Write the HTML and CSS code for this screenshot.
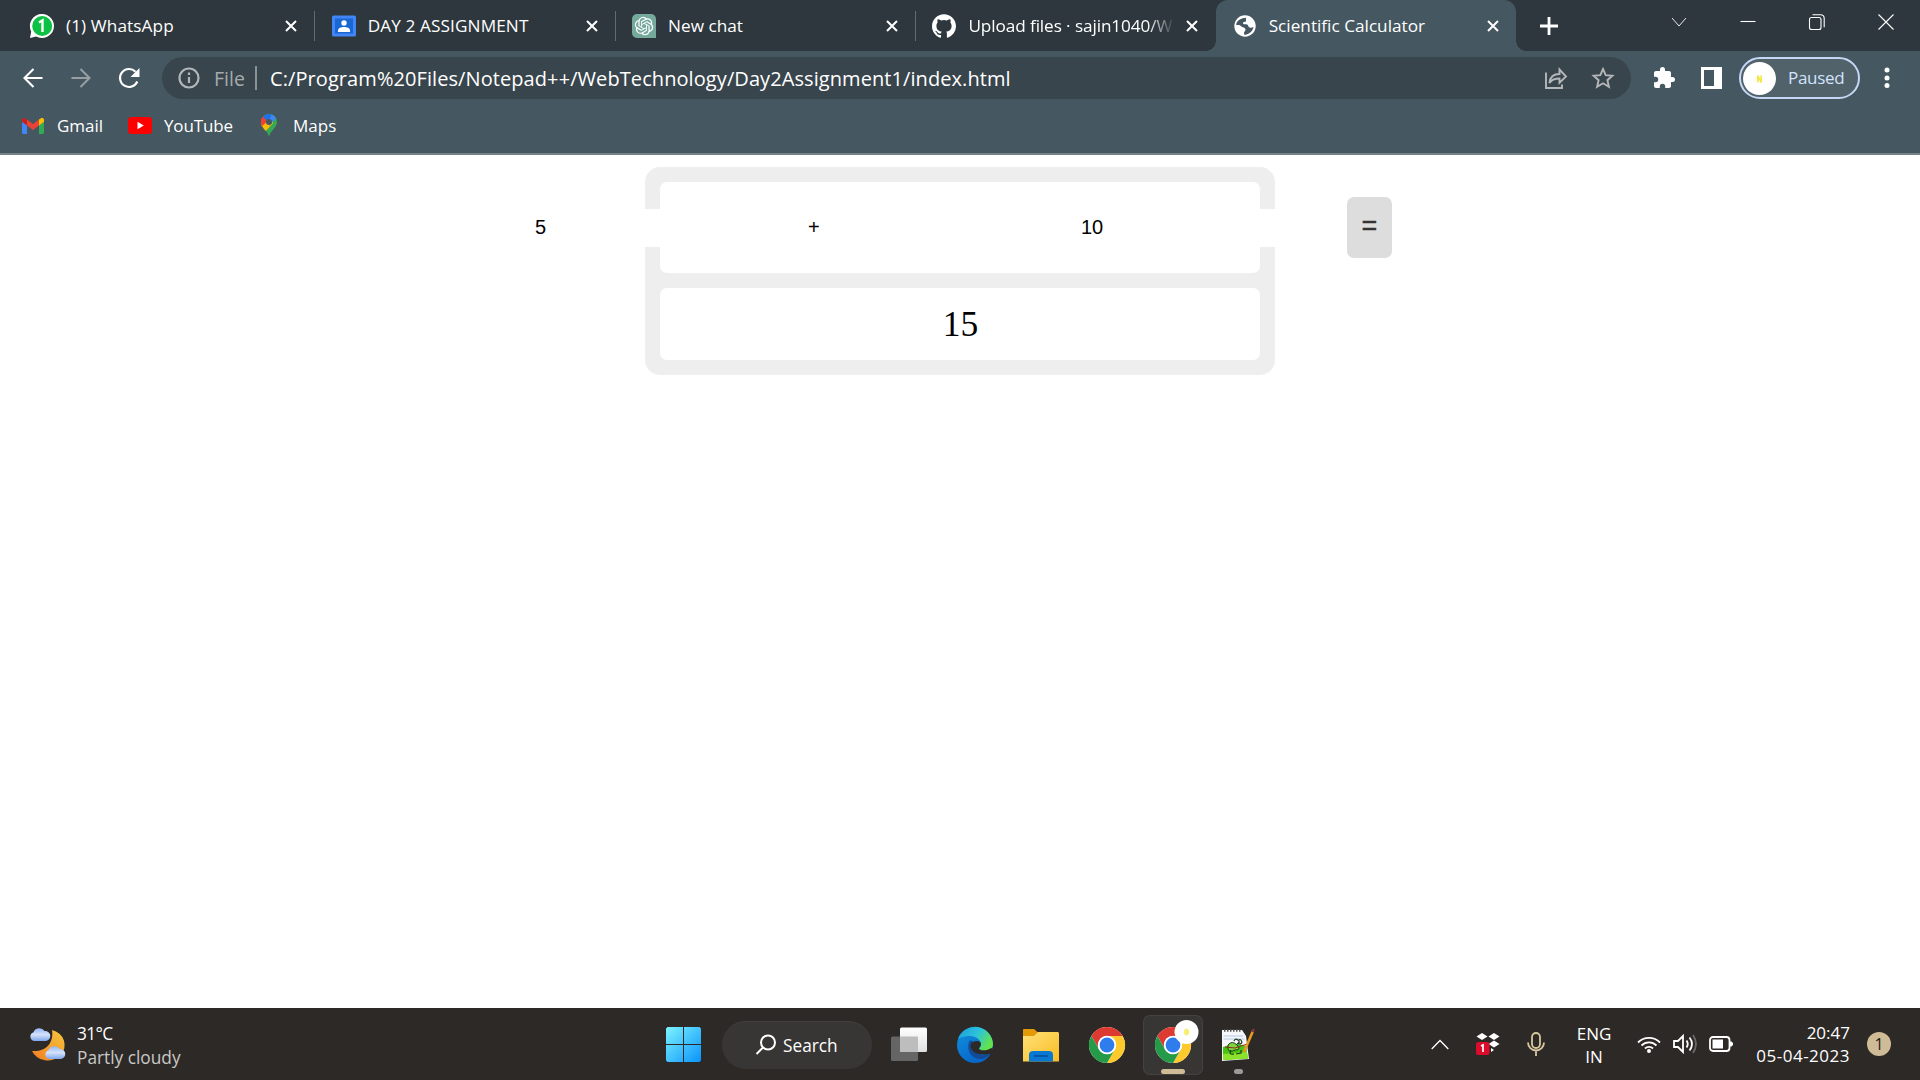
FILE: index.html
```html
<!DOCTYPE html>
<html lang="en">
<head>
<meta charset="utf-8">
<title>Scientific Calculator</title>
<link rel="stylesheet" href="styles.css">
</head>
<body>
<header class="browser">
  <div class="tabs">
    <div class="tab">
      <svg class="favicon" viewBox="0 0 24 24"><path d="M12 0a12 12 0 1 1-5.800 22.500L0 24l1.200-6.500A12 12 0 0 1 12 0z" fill="#fff"/><circle cx="12.200" cy="12" r="10" fill="#0cc143"/><path d="M9 8.500l3.500-2.200V18" fill="none" stroke="#fff" stroke-width="2.400"/></svg>
      <span class="title t-wa">(1) WhatsApp</span>
      <svg class="close" viewBox="0 0 12 12"><path d="M1 1l10 10M11 1L1 11"/></svg>
    </div>
    <div class="tab">
      <svg class="favicon" viewBox="0 0 24 24"><rect y="1.500" width="24" height="21" rx="1.500" fill="#4285f4"/><rect x="3" y="4.500" width="18" height="15" fill="#1967d2"/><circle cx="12" cy="9" r="2.700" fill="#fff"/><path d="M6 18v-1.500c0-2.500 3-3.500 6-3.500s6 1 6 3.500V18z" fill="#fff"/></svg>
      <span class="title t-day">DAY 2 ASSIGNMENT</span>
      <svg class="close" viewBox="0 0 12 12"><path d="M1 1l10 10M11 1L1 11"/></svg>
    </div>
    <div class="tab">
      <svg class="favicon" viewBox="0 0 24 24"><path d="M5 0h14a5 5 0 0 1 5 5v19H5a5 5 0 0 1-5-5V5a5 5 0 0 1 5-5z" fill="#75a99c"/><g transform="translate(2.800 2.800) scale(.77)" fill="#fff"><path d="M22.282 9.821a5.985 5.985 0 0 0-.516-4.910 6.046 6.046 0 0 0-6.510-2.900A6.065 6.065 0 0 0 4.981 4.182a5.985 5.985 0 0 0-3.998 2.900 6.046 6.046 0 0 0 .743 7.097 5.980 5.980 0 0 0 .511 4.911 6.051 6.051 0 0 0 6.515 2.900A5.985 5.985 0 0 0 13.260 24a6.056 6.056 0 0 0 5.772-4.206 5.990 5.990 0 0 0 3.998-2.900 6.056 6.056 0 0 0-.748-7.073zM13.260 22.430a4.476 4.476 0 0 1-2.876-1.040l.142-.081 4.778-2.758a.795.795 0 0 0 .393-.682v-6.736l2.020 1.168a.071.071 0 0 1 .038.052v5.583a4.504 4.504 0 0 1-4.495 4.494zM3.600 18.304a4.471 4.471 0 0 1-.535-3.014l.142.085 4.783 2.759a.771.771 0 0 0 .780 0l5.843-3.369v2.332a.080.080 0 0 1-.033.062L9.740 19.950a4.499 4.499 0 0 1-6.140-1.646zM2.341 7.896a4.485 4.485 0 0 1 2.366-1.973V11.600a.766.766 0 0 0 .388.677l5.815 3.354-2.020 1.169a.076.076 0 0 1-.071 0l-4.830-2.787A4.504 4.504 0 0 1 2.341 7.872zm16.596 3.856L13.104 8.364l2.015-1.164a.076.076 0 0 1 .071 0l4.830 2.791a4.494 4.494 0 0 1-.676 8.105v-5.678a.790.790 0 0 0-.407-.666zm2.011-3.024l-.142-.085-4.774-2.782a.776.776 0 0 0-.785 0L9.409 9.230V6.897a.066.066 0 0 1 .028-.061l4.830-2.787a4.499 4.499 0 0 1 6.681 4.660zM8.307 12.863l-2.020-1.164a.080.080 0 0 1-.038-.057V6.074a4.499 4.499 0 0 1 7.376-3.453l-.142.080L8.704 5.459a.795.795 0 0 0-.393.682zm1.097-2.365l2.602-1.500 2.607 1.500v2.999l-2.597 1.500-2.607-1.500z"/></g></svg>
      <span class="title t-chat">New chat</span>
      <svg class="close" viewBox="0 0 12 12"><path d="M1 1l10 10M11 1L1 11"/></svg>
    </div>
    <div class="tab last">
      <svg class="favicon" viewBox="0 0 24 24"><path fill="#fff" d="M12 .3C5.400.3 0 5.700 0 12.300c0 5.300 3.400 9.800 8.200 11.400.6.1.8-.3.8-.6v-2.200c-3.300.7-4-1.400-4-1.400-.5-1.400-1.300-1.800-1.300-1.800-1.100-.7.1-.7.100-.7 1.200.1 1.800 1.200 1.800 1.200 1.100 1.800 2.800 1.300 3.500 1 .1-.8.4-1.300.8-1.600-2.700-.3-5.500-1.300-5.500-5.900 0-1.300.5-2.400 1.200-3.200-.1-.3-.5-1.500.1-3.200 0 0 1-.3 3.300 1.200a11.500 11.500 0 0 1 6 0c2.300-1.500 3.300-1.200 3.300-1.200.7 1.700.2 2.900.1 3.200.8.8 1.200 1.900 1.200 3.200 0 4.600-2.800 5.600-5.500 5.900.4.400.8 1.100.8 2.200v3.300c0 .3.200.7.8.6A12 12 0 0 0 24 12.300C24 5.700 18.600.3 12 .3z"/></svg>
      <span class="title t-git fade">Upload files · sajin1040/W</span>
      <svg class="close" viewBox="0 0 12 12"><path d="M1 1l10 10M11 1L1 11"/></svg>
    </div>
    <div class="tab active">
      <svg class="favicon" viewBox="0 0 24 24"><circle cx="12" cy="12" r="10.700" fill="#fff"/><path d="M13.500 3.800C8 4 3.500 6.500 3.200 11c2.500-.3 4 0 5 1.200 1.200 1.500 4 .8 4.300 3.300.2 1.800-1.500 2-1.500 3.500 0 1 .3 1.500.8 1.900C16 20.500 20 17 20.500 13c-1.500.6-2.500 1.200-4 .5-1.500-.8-1-2.500-2.500-3-1.500-.6-4 .5-4-1.200 0-2 2.500-.8 3-2.300.3-1.200-.5-2 .5-3.200z" fill="#455760"/></svg>
      <span class="title t-sci">Scientific Calculator</span>
      <svg class="close" viewBox="0 0 12 12"><path d="M1 1l10 10M11 1L1 11"/></svg>
    </div>
    <svg class="newtab" viewBox="0 0 18 18"><path d="M9 0v18M0 9h18" stroke="#fff" stroke-width="2.800"/></svg>
    <div class="winctl">
      <svg viewBox="0 0 16 16"><path d="M1 4l7 8 7-8"/></svg>
      <svg viewBox="0 0 16 16"><path d="M.5 7.500h15"/></svg>
      <svg viewBox="0 0 16 16"><rect x=".5" y="3.500" width="11.500" height="12" rx="2"/><path d="M3.500.7h8.200a3.500 3.500 0 0 1 3.500 3.500v9"/></svg>
      <svg viewBox="0 0 16 16"><path d="M.5.5l15 15M15.500.5l-15 15"/></svg>
    </div>
  </div>
  <div class="toolbar">
    <svg class="nav" viewBox="0 0 24 24"><path d="M21.500 12H3.500M12.500 3L3.500 12l9 9"/></svg>
    <svg class="nav dim" viewBox="0 0 24 24"><path d="M2.500 12h18M11.500 3l9 9-9 9"/></svg>
    <svg class="nav" viewBox="0 0 24 24"><path d="M20.300 15.500a9 9 0 1 1-1.800-9.800" /><path d="M22.500 2v9h-9z" fill="#fff" stroke="none"/></svg>
    <div class="address">
      <svg class="info" viewBox="0 0 22 22"><circle cx="11" cy="11" r="9.500"/><path d="M11 10v6M11 5.500v2.500"/></svg>
      <span class="file">File</span>
      <i class="bar"></i>
      <span class="url">C:/Program%20Files/Notepad++/WebTechnology/Day2Assignment1/index.html</span>
      <svg class="share" viewBox="0 0 24 24"><path d="M2 6.500V22h16v-3.500"/><path d="M5.500 17c.5-6 3.500-9 10-9V3.500l6.500 7-6.500 6.300v-4.300c-5 0-8 1-10 4.500z"/></svg>
      <svg class="star" viewBox="0 0 24 24"><path d="M12 3l2.700 6.100 6.700.6-5 4.500 1.500 6.600-5.900-3.500-5.900 3.500 1.500-6.600-5-4.500 6.700-.6z"/></svg>
    </div>
    <svg class="ext" viewBox="0 0 24 24"><path fill="#fff" d="M20.500 11H19V7c0-1.100-.9-2-2-2h-4V3.500a2.500 2.500 0 0 0-5 0V5H4c-1.100 0-2 .9-2 2v3.800h1.500a2.700 2.700 0 0 1 0 5.400H2V20c0 1.100.9 2 2 2h3.800v-1.500a2.700 2.700 0 0 1 5.400 0V22H17c1.100 0 2-.9 2-2v-4h1.500a2.500 2.500 0 0 0 0-5z"/></svg>
    <i class="panel"></i>
    <div class="profile"><svg class="avatar" viewBox="0 0 33 33"><circle cx="16.500" cy="16.500" r="16.500" fill="#fff"/><path d="M14.800 20.500v-7l3.400 7v-7" fill="none" stroke="#f3e743" stroke-width="1.700"/></svg><span class="paused">Paused</span></div>
    <svg class="dots" viewBox="0 0 6 22"><circle cx="3" cy="3" r="2.500"/><circle cx="3" cy="11" r="2.500"/><circle cx="3" cy="18.500" r="2.500"/></svg>
  </div>
  <nav class="bookmarks">
    <svg class="gmail" viewBox="0 0 22 16"><path d="M0 2v12.500C0 15.300.7 16 1.500 16H5V6z" fill="#4285f4"/><path d="M22 2v12.500c0 .8-.7 1.500-1.500 1.500H17V6z" fill="#34a853"/><path d="M17 1.500V7.500l5-3.700V2c0-2-2-2.500-3.500-1.500z" fill="#fbbc04"/><path d="M5 7.500V1.500L11 6l6-4.500v6L11 12z" fill="#ea4335"/><path d="M0 2c0-2 2-2.500 3.500-1.500L5 1.500v6L0 3.800z" fill="#c5221f"/></svg>
    <span class="b-gmail">Gmail</span>
    <svg class="youtube" viewBox="0 0 24 17"><rect width="24" height="17" rx="3.500" fill="#f00"/><path d="M9.500 4.800v7.400l6.300-3.700z" fill="#fff"/></svg>
    <span class="b-yt">YouTube</span>
    <svg class="maps" viewBox="0 0 16 23"><clipPath id="pin"><path d="M8 0a8 8 0 0 1 8 8c0 6-6.500 8-8 15C6.500 16 0 14 0 8a8 8 0 0 1 8-8z"/></clipPath><g clip-path="url(#pin)"><rect width="16" height="23" fill="#34a853"/><path d="M-1 9L8 8l4 1-9 9z" fill="#fbbc04"/><path d="M-1 2l3 0 6 6-6 5-3-2z" fill="#ea4335"/><path d="M-1 12l9-9 4 6-9 10z" fill="#fbbc04"/><path d="M-1 1h4l5 5-8 7z" fill="#ea4335"/><path d="M2 3L6-1h7L8 8z" fill="#1a73e8"/><path d="M11 0l5 3-8 9V6z" fill="#4285f4"/></g><circle cx="8" cy="8" r="3" fill="#455760"/></svg>
    <span class="b-maps">Maps</span>
  </nav>
</header>
<main class="page">
  <section class="calculator">
    <div class="box entry">
      <div class="fields">
        <span class="operand">5</span>
        <span class="operator">+</span>
        <span class="operand second">10</span>
        <button class="equals">=</button>
      </div>
    </div>
    <div class="box result">15</div>
  </section>
</main>
<footer class="taskbar">
  <div class="weather">
    <svg viewBox="0 0 36 34"><defs><linearGradient id="moon" x1="0" y1="1" x2="1" y2="0"><stop stop-color="#f47b20"/><stop offset="1" stop-color="#f5c83e"/></linearGradient><linearGradient id="cloud" x1="0" y1="0" x2="0" y2="1"><stop stop-color="#8fb6f4"/><stop offset=".5" stop-color="#d5e2fb"/><stop offset="1" stop-color="#7ea7ec"/></linearGradient></defs><path d="M23 3a17 15.500 0 1 1-20 21C17 25 25 16 23 3z" fill="url(#moon)"/><path id="cl" d="M5 14a4.500 4.500 0 0 1-.5-8.700A6 5.500 0 0 1 15.500 4a5 5 0 0 1 1.500 10z" fill="url(#cloud)"/><use href="#cl" x="15" y="18"/></svg>
    <div class="wtext"><span class="w-temp">31°C</span><span class="w-sky">Partly cloudy</span></div>
  </div>
  <div class="apps">
    <svg class="app win" viewBox="0 0 36 36"><defs><linearGradient id="wn" gradientUnits="userSpaceOnUse" x1="0" y1="0" x2="35" y2="35"><stop stop-color="#7df3ff"/><stop offset="1" stop-color="#0a93fb"/></linearGradient></defs><path d="M1.500 0H17v17H0V1.500zM18 0h15.500L35 1.500V17H18zM0 18h17v17H1.500L0 33.500zM18 18h17v15.500L33.500 35H18z" fill="url(#wn)"/></svg>
    <div class="search"><svg viewBox="0 0 22 22"><circle cx="13" cy="8.500" r="7"/><path d="M8 13.500L1.500 20"/></svg><span class="s-text">Search</span></div>
    <svg class="app view" viewBox="0 0 36 36"><defs><linearGradient id="tv" x1="0" y1="0" x2="0" y2="1"><stop stop-color="#fff"/><stop offset="1" stop-color="#e0e0e0"/></linearGradient></defs><rect y="9.500" width="27" height="24.500" rx="1.500" fill="#656565"/><rect x="9" y=".5" width="27" height="24.500" rx="1.500" fill="url(#tv)"/><path d="M9 9.500h18V25H9z" fill="#bdbdbd"/></svg>
    <svg class="app" viewBox="0 0 36 36"><defs><linearGradient id="e1" x1="0" y1="0" x2="1" y2=".5"><stop stop-color="#199bdc"/><stop offset=".55" stop-color="#2cc3dc"/><stop offset="1" stop-color="#62e34c"/></linearGradient><linearGradient id="e2" x1="0" y1="0" x2=".5" y2="1"><stop stop-color="#1193df"/><stop offset="1" stop-color="#0866c8"/></linearGradient></defs><circle cx="18" cy="18" r="18" fill="url(#e2)"/><path d="M1 12A18 18 0 0 1 36 17c0 5-4 7.500-8 7.500-3.500 0-6-1-6-2.500 0-1 2-2 2-5 0-4-5-8-11-8C7 9 2 11 1 12z" fill="url(#e1)"/><path d="M12 15c-3 9 3 18 13 17 4-.5 7-3 8-5-5 2-11 1-14-2-2-2-4-5-2-9-2-3-4-3-5-1z" fill="#134a97"/><path d="M19 14c-6 1-7 6-3 10 4 4 11 4 17 3l1 1 4-5-4-2c-3 3-12 3-12 .5 0-1.500 1.800-2 2-4.500 0-2-2-3.500-5-3z" fill="#2c2926"/></svg>
    <svg class="app" viewBox="0 0 36 36"><defs><linearGradient id="fd" x1="0" y1="0" x2="1" y2="1"><stop stop-color="#ffe07a"/><stop offset="1" stop-color="#f9bd22"/></linearGradient></defs><path d="M0 3c0-.6.500-1 1-1h10l4 3.500h12V12H0z" fill="#e39a06"/><path d="M0 9h11l4-4h20l1 1v28.500H0z" fill="url(#fd)"/><path d="M6 34.500V28q0-4 4-4h16q4 0 4 4v6.500z" fill="#0878d2"/><path d="M11 29h14" stroke="#064e99" stroke-width="1.600"/></svg>
    <svg class="app" viewBox="0 0 36 36"><g id="chrome"><circle cx="18" cy="18" r="18" fill="#fff"/><path d="M2.400 9A18 18 0 0 1 33.600 9H18a9 9 0 0 0-7.800 13.500z" fill="#dd3a31"/><path d="M33.600 9A18 18 0 0 1 18 36l7.800-13.500A9 9 0 0 0 18 9z" fill="#fdc92c"/><path d="M18 36A18 18 0 0 1 2.400 9l7.800 13.500A9 9 0 0 0 25.800 22.500z" fill="#259a49"/><circle cx="18" cy="18" r="9.200" fill="#fff"/><circle cx="18" cy="18" r="7.400" fill="#2f7ced"/></g></svg>
    <div class="current"><svg viewBox="0 0 60 60"><use href="#chrome" x="12" y="12"/><circle cx="43.500" cy="17" r="12" fill="#fff"/><ellipse cx="43.500" cy="17" rx="2.500" ry="3.500" fill="#f6ef70"/><rect x="18" y="54" width="24" height="5" rx="2.500" fill="#cfbc97"/></svg></div>
    <svg class="npp" viewBox="0 0 36 60"><path d="M3 15h20l4 6 3 23-27 2z" fill="#f5f7fb"/><path d="M4.500 24h21M4.500 21h20" stroke="#b3c9e2"/><path d="M4 32c7-3 15-4 23-1l2 12.500L4 45z" fill="#48c415"/><path d="M4 39l24-2 1 6.500L4 45z" fill="#8ce32b"/><path d="M5 15.500h18" stroke="#555" stroke-width="2.500" stroke-dasharray="1.500 1.500"/><path d="M9 30q4-5 9 0t-2 5q-6 3-7-1z" fill="#7fd63b" stroke="#1d3a19"/><path d="M15 26q1-3 4-1t-1 4M19 26q2-3 3.500 0t-3 3M12 35q-3 5 3 4M17 39l5-1v-3" fill="none" stroke="#1d3a19" stroke-width="1.200"/><path d="M6 32l10 1 12-4" stroke="#902c24" fill="none"/><path d="M25 37L34 16" stroke="#e99a20" stroke-width="2.600"/><path d="M33.500 17l1.500-3" stroke="#87313b" stroke-width="2.600"/><rect x="15" y="54" width="9" height="5" rx="2.500" fill="#9b9a99"/></svg>
  </div>
  <div class="tray">
    <svg class="chev" viewBox="0 0 18 11"><path d="M.7 10L9 1.500 17.300 10" class="line"/></svg>
    <svg class="dropbox" viewBox="0 0 24 24"><path d="M6 1l5.500 3.500L6 8 .5 4.500zM18 1l5.500 3.500L18 8l-5.500-3.500zM18 8.500l5.500 3.500-5.500 3.500-5.500-3.500zM15 16l3 2-3 2z" fill="#fff"/><rect y="10" width="13.500" height="13" rx="2.500" fill="#dc0b2b"/><path d="M5 14l2-1v7" stroke="#fff" stroke-width="1.700" fill="none"/></svg>
    <svg class="mic" viewBox="0 0 18 24"><rect x="5" y="1" width="8" height="15" rx="4"/><path d="M1 10.500a8 8 0 0 0 16 0M9 18.500V24"/></svg>
    <div class="lang"><span class="l1">ENG</span><span class="l2">IN</span></div>
    <svg class="wifi" viewBox="0 0 24 18"><g class="line"><path d="M1 7.500a15.500 15.500 0 0 1 22 0M4.500 10.500a10.500 10.500 0 0 1 15 0M8 13.500a5.700 5.700 0 0 1 8 0"/></g><circle cx="12" cy="16" r="2" fill="#fff"/></svg>
    <svg class="vol" viewBox="0 0 24 20"><g class="line"><path d="M1 7h4l5-5v16l-5-5H1zM13.500 6.500q2.500 3.500 0 7M16.500 3.500q5 6.500 0 13"/><path d="M20 1q6 9 0 18" opacity=".3"/></g></svg>
    <svg class="bat" viewBox="0 0 24 16"><rect x="1" y="1" width="19.500" height="14" rx="3" class="line"/><path d="M3.500 3.500h10.500v9H3.500zM21 5.500h1.500L24 7v2l-1.500 1.500H21z" fill="#fff"/></svg>
    <div class="clock"><span class="c1">20:47</span><span class="c2">05-04-2023</span></div>
    <span class="count">1</span>
  </div>
</footer>
</body>
</html>
```
FILE: styles.css
```css
* { box-sizing: border-box; }
body { margin: 0; width: 1920px; height: 1080px; overflow: hidden; display: flex; flex-direction: column; background: #fff; font-family: "Open Sans", "Noto Sans", sans-serif; color: #fff; }
svg { display: block; flex: none; overflow: visible; }
span { white-space: nowrap; }
.browser { height: 155px; flex: none; background: #455760; border-bottom: 2px solid #738286; }
.tabs { height: 51px; background: #2d373d; display: flex; align-items: center; padding-left: 15px; }
.tab { position: relative; width: 300.3px; height: 30px; flex: none; display: flex; align-items: center; padding: 0 17px 0 15px; border-right: 1.500px solid #626b70; font-size: 17.200px; }
.tab.last { border-color: transparent; }
.tab + .tab { padding-left: 16.500px; }
.favicon { width: 24px; height: 24px; margin-right: 12px; }
.title { flex: 1; overflow: hidden; margin-right: 7px; line-height: 30px; }
.t-wa, .t-day { letter-spacing: .1px; }
.t-git { letter-spacing: -.1px; }
.fade { -webkit-mask-image: linear-gradient(90deg, #000 85%, transparent 98%); mask-image: linear-gradient(90deg, #000 85%, transparent 98%); }
.close { width: 12px; height: 12px; stroke: #fff; stroke-width: 2; }
.tab.active { height: 51px; background: #455760; border: 0; border-radius: 12px 12px 0 0; }
.tab.active::before, .tab.active::after { content: ""; position: absolute; bottom: 0; width: 10px; height: 10px; }
.tab.active::before { left: -10px; background: radial-gradient(circle at 0 0, transparent 9.500px, #455760 10px); }
.tab.active::after { right: -10px; background: radial-gradient(circle at 100% 0, transparent 9.500px, #455760 10px); }
.newtab { width: 18px; height: 18px; margin-left: 24px; }
.winctl { margin: 0 26px 8px auto; display: flex; gap: 53px; }
.winctl svg { width: 16px; height: 16px; fill: none; stroke: #fff; stroke-width: 1.100; }
.winctl svg:first-child { stroke-width: .9; }
.toolbar { height: 54px; display: flex; align-items: center; padding-left: 21px; }
.nav { width: 24px; height: 24px; margin-right: 24px; fill: none; stroke: #fff; stroke-width: 2.100; }
.nav.dim { opacity: .43; }
.address { width: 1469px; height: 42px; margin-left: -3px; border-radius: 21px; background: #39454c; display: flex; align-items: center; padding-left: 16px; }
.info { width: 22px; height: 22px; margin-right: 14px; fill: none; stroke: #b1b6b9; stroke-width: 2.200; }
.file { width: 41px; font-size: 19.500px; color: #a4abae; }
.bar { width: 2px; height: 24px; background: #8b9296; margin-right: 13px; }
.url { flex: 1; font-size: 20px; letter-spacing: .08px; }
.share, .star { width: 24px; height: 24px; fill: none; stroke: #b4b7b9; stroke-width: 1.900; }
.star { margin: 0 16px 0 23px; }
.ext { width: 24px; height: 24px; margin-left: 21px; }
.panel { width: 21px; height: 22px; margin-left: 25px; border: solid #fff; border-width: 3px 8px 3px 3px; }
.profile { width: 121px; height: 42px; margin-left: 17px; border: 2px solid #c4d7f5; border-radius: 21px; background: #51626b; display: flex; align-items: center; padding-left: 2px; }
.avatar { width: 33px; height: 33px; margin-right: 12px; }
.paused { font-size: 17px; letter-spacing: -.3px; color: #d3e3fd; line-height: 24px; margin-top: -1px; }
.dots { width: 6px; height: 22px; margin-left: 24px; fill: #fff; }
.bookmarks { height: 41px; display: flex; align-items: center; padding-left: 22px; font-size: 17px; }
.bookmarks span { margin-top: -1px; }
.gmail { width: 22px; height: 16px; margin-right: 13px; }
.b-gmail { width: 71px; }
.youtube { width: 24px; height: 17px; margin-right: 12px; }
.b-yt { width: 97px; letter-spacing: -.15px; }
.maps { width: 16px; height: 23px; margin-right: 16px; }

.page { flex: 1; padding-top: 12px; color: #000; }
.calculator { width: 630px; height: 208px; margin: 0 auto; padding: 15px; border-radius: 15px; background: #eee; display: flex; flex-direction: column; gap: 15px; }
.box { border-radius: 7px; background: #fff; }
.entry { height: 91px; padding: 15px 0; display: flex; justify-content: center; }
.fields { width: 864px; height: 61px; flex: none; display: grid; grid-template-columns: 278px 262px 279px 45px; align-items: center; font: 20px "Liberation Sans", sans-serif; }
.operand, .operator { height: 38px; line-height: 37px; margin-top: 1px; background: #fff; }
.operand { padding-left: 7px; }
.operator { padding-left: 2px; }
.operand.second { padding-left: 13px; width: 262px; }
.equals { width: 45px; height: 61px; padding: 0 0 2px; border: 0; border-radius: 7px; background: #ddd; color: #333; font: 27px "Liberation Sans", sans-serif; -webkit-text-stroke: .3px #333; }
.result { height: 72px; line-height: 72px; text-align: center; padding-left: 1px; font-family: "Liberation Serif", serif; font-size: 35.500px; }

.taskbar { height: 72px; flex: none; background: #2c2926; display: grid; grid-template-columns: 666px 1fr auto; }
.weather { display: flex; align-items: center; padding-left: 29px; gap: 12px; }
.weather svg { width: 36px; height: 34px; }
.wtext { display: flex; flex-direction: column; font-size: 17.300px; line-height: 24px; padding-top: 3px; }
.w-temp { letter-spacing: -.6px; }
.w-sky { color: #c9c8c7; }
.apps { display: flex; align-items: center; }
.app { width: 36px; height: 36px; margin: 2px 30px 0 0; }
.win { margin-right: 20px; }
.search { width: 150px; height: 48px; margin: 2px 19px 0 0; border-radius: 24px; background: #383634; border-top: 1px solid #42403e; display: flex; align-items: center; padding-left: 33px; gap: 6px; font-size: 17.300px; }
.search svg { width: 22px; height: 22px; fill: none; stroke: #fff; stroke-width: 2; margin-bottom: 2px; }
.current { width: 60px; height: 60px; margin: 2px 17px 0 -12px; border-radius: 7px; background: #383634; box-shadow: inset 0 0 0 1px #444240; }
.npp { width: 36px; height: 60px; margin: 2px 0 0 -1px; }
.tray { display: flex; align-items: center; font-size: 17px; }
.tray .line { fill: none; stroke: #fff; stroke-width: 1.800; }
.tray .chev .line { stroke-width: 1.300; }
.chev { width: 18px; height: 11px; margin-right: 27px; }
.dropbox { width: 24px; height: 24px; margin-right: 27px; }
.mic { width: 18px; height: 24px; margin-right: 30px; fill: none; stroke: #d7c79f; stroke-width: 1.800; }
.lang { width: 38px; margin-right: 24px; text-align: center; line-height: 23px; display: flex; flex-direction: column; padding-top: 1px; }
.wifi { width: 24px; height: 18px; margin-right: 12px; }
.vol { width: 24px; height: 20px; margin-right: 12px; }
.bat { width: 24px; height: 16px; }
.clock { width: 117px; text-align: right; line-height: 23px; display: flex; flex-direction: column; }
.c2 { letter-spacing: .5px; }
.count { width: 24px; height: 24px; margin: 0 29px 0 17px; border-radius: 50%; background: #cfbc97; color: #1d1b18; text-align: center; line-height: 24px; font-size: 16px; }
```
